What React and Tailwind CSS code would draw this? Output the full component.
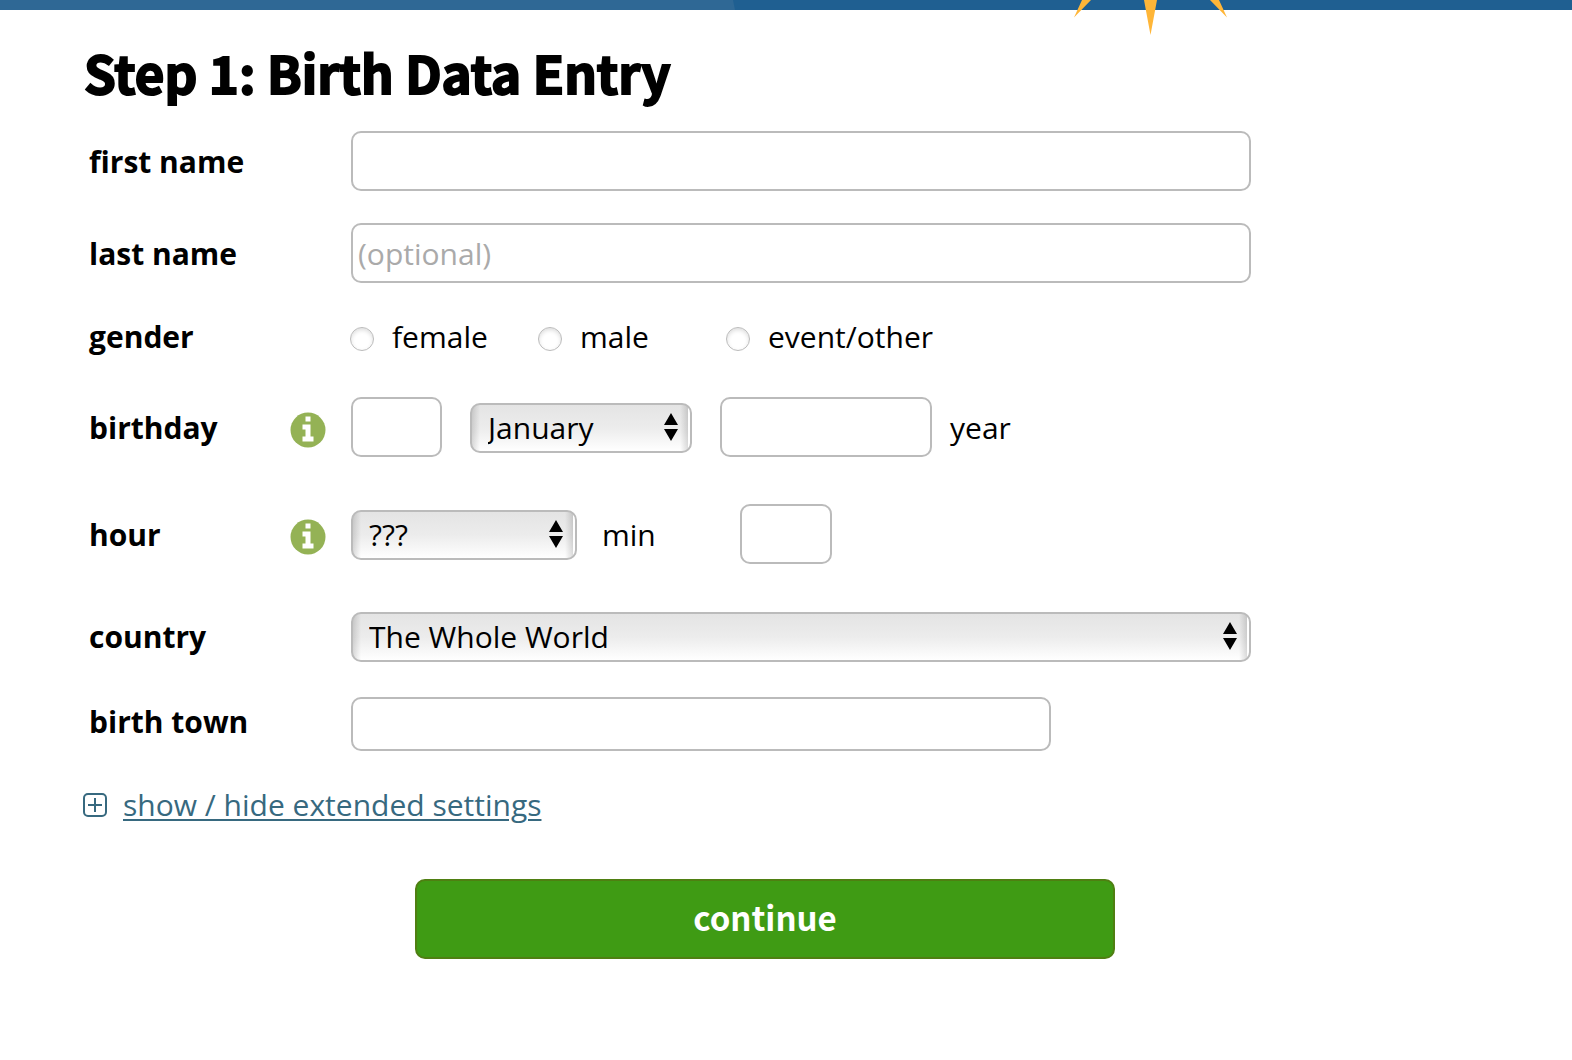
import { useState } from 'react';

const MONTHS = ['January', 'February', 'March', 'April', 'May', 'June', 'July',
  'August', 'September', 'October', 'November', 'December'];
const GENDERS = ['female', 'male', 'event/other'];
const COUNTRIES = ['The Whole World', 'Germany', 'Switzerland', 'United Kingdom', 'USA'];

function TextInput({ className, ...props }) {
  return (
    <input
      type="text"
      className={`rounded-[10px] border-2 border-[#bbb] bg-white px-[5px] placeholder:text-[#aaa] ${className}`}
      {...props}
    />
  );
}

function Select({ className, options, ...props }) {
  return (
    <div className={`relative ${className}`}>
      <select
        className="block h-[50px] w-full appearance-none rounded-[10px] border-2 border-[#bbb] px-4 leading-[46px]
          bg-[linear-gradient(to_right,#0002,transparent_8px,transparent_calc(100%-10px),#0002_calc(100%-2px),#fff_calc(100%-2px)),linear-gradient(#e4e4e4,#ececec_50%,#fff)]"
        {...props}>
        {options.map(option => <option key={option}>{option}</option>)}
      </select>
      <svg className="pointer-events-none absolute top-[10px] right-[14px] h-7 w-[14px]" viewBox="0 0 14 28">
        <path d="M7 0L14 12H0zM0 16H14L7 28z" />
      </svg>
    </div>
  );
}

function InfoButton({ label }) {
  return (
    <button type="button" aria-label={label} className="mt-1">
      <svg className="block h-9 w-9" viewBox="0 0 36 36">
        <circle cx="18" cy="18" r="17.5" fill="#94b255" />
        <path fill="#fff" d="M15.500 4.500h5v5h-5zM12.500 12.500h8v12h3v5h-11v-5h3v-7h-3z" />
      </svg>
    </button>
  );
}

function Row({ label, htmlFor, info, className, labelClass = 'pt-0.5', children }) {
  return (
    <div className={`flex items-center ${className}`}>
      <div className={`flex w-[262px] shrink-0 items-center justify-between pr-[25px] ${labelClass}`}>
        <label htmlFor={htmlFor} className="font-bold">{label}</label>
        {info && <InfoButton label={info} />}
      </div>
      {children}
    </div>
  );
}

export default function App() {
  const [gender, setGender] = useState('');
  const [extended, setExtended] = useState(false);

  return (
    <div className="min-h-screen bg-white font-['Open_Sans','Noto_Sans',sans-serif] text-[30px] leading-10 text-black">
      <header className="relative h-[10px] bg-[#1f5f91]">
        <svg className="h-[10px] w-[736px]" viewBox="0 0 736 10" preserveAspectRatio="none">
          <path d="M0 0H733L735 10H0z" fill="#2f6895" />
        </svg>
        <svg className="absolute top-0 left-[1070px] h-9 w-[160px]" viewBox="0 0 160 36">
          <path d="M12 0H21L4 17.5zM74 0H87L80.500 35zM140 0H149L157 17.500z" fill="#ffb638" />
        </svg>
      </header>

      <main className="max-w-[1251px] pl-[89px]">
        <h1 className="-ml-[5px] pt-7 font-['Noto_Sans_CJK_JP',sans-serif] text-[51px] leading-[68px] font-bold
          [-webkit-text-stroke:2px_black]">
          Step 1: Birth Data Entry
        </h1>

        <form className="mt-[25px]" onSubmit={e => e.preventDefault()}>
          <Row label="first name" htmlFor="first">
            <TextInput id="first" className="h-[60px] w-full" />
          </Row>

          <Row label="last name" htmlFor="last" className="mt-8">
            <TextInput id="last" className="h-[60px] w-full" placeholder="(optional)" />
          </Row>

          <Row label="gender" labelClass="" className="mt-[34px]">
            <div className="-ml-px flex">
              {GENDERS.map(g => (
                <label key={g} className="flex w-[188px] items-center gap-[18px]">
                  <input
                    type="radio"
                    name="gender"
                    value={g}
                    checked={gender === g}
                    onChange={() => setGender(g)}
                    className="mt-1 h-6 w-6 shrink-0 appearance-none rounded-full border border-[#bbb] bg-white
                      shadow-[inset_0_2px_4px_#ddd] checked:bg-[#94b255]"
                  />
                  {g}
                </label>
              ))}
            </div>
          </Row>

          <Row label="birthday" htmlFor="day" info="About the birthday" className="mt-10">
            <TextInput id="day" className="h-[60px] w-[91px]" />
            <Select className="mt-0.5 ml-7 w-[222px]" aria-label="month" options={MONTHS} />
            <TextInput id="year" className="ml-7 h-[60px] w-[212px]" />
            <label htmlFor="year" className="ml-[18px] pt-0.5">year</label>
          </Row>

          <Row label="hour" htmlFor="hour" info="About the birth hour" className="mt-[47px]">
            <Select id="hour" className="mt-0.5 w-[226px]" options={['???', ...Array.from({ length: 24 }, (_, i) => String(i))]} />
            <label htmlFor="min" className="ml-[25px] w-[138px] pt-0.5">min</label>
            <TextInput id="min" className="h-[60px] w-[92px]" />
          </Row>

          <Row label="country" htmlFor="country" labelClass="" className="mt-12">
            <Select id="country" className="w-full" options={COUNTRIES} />
          </Row>

          <Row label="birth town" htmlFor="town" labelClass="pb-1" className="mt-[35px]">
            <TextInput id="town" className="h-[54px] w-[700px]" />
          </Row>

          <div className="mt-[34px] -ml-[6px] flex items-center gap-4 text-[#37697f]">
            <svg className="h-6 w-6" viewBox="0 0 24 24" fill="none" stroke="currentColor" strokeWidth="2">
              <rect x="1" y="1" width="22" height="22" rx="4" />
              <path d="M12 5V19M5 12H19" />
            </svg>
            <a
              href="#extended"
              onClick={() => setExtended(!extended)}
              className="underline decoration-2 underline-offset-3">
              show / hide extended settings
            </a>
          </div>

          <button
            type="submit"
            className="mt-[54px] ml-[326px] h-20 w-[700px] rounded-[10px] border-2 border-[#4f7f12] bg-[#3f9b14] pb-1
              font-['Noto_Sans_CJK_JP',sans-serif] text-[33px] font-bold text-white">
            continue
          </button>
        </form>
      </main>
    </div>
  );
}
